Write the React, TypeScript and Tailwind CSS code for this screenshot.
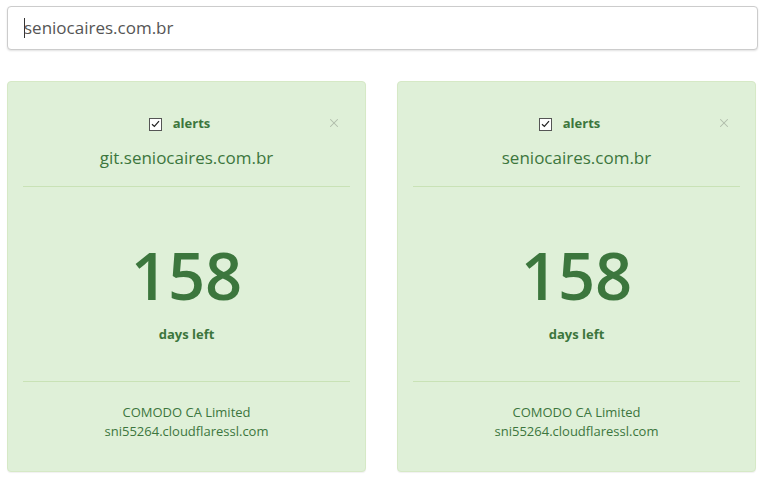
import { X } from "lucide-react";

const certs = [
  { host: "git.seniocaires.com.br", days: 158, issuer: "COMODO CA Limited", cn: "sni55264.cloudflaressl.com" },
  { host: "seniocaires.com.br", days: 158, issuer: "COMODO CA Limited", cn: "sni55264.cloudflaressl.com" },
];

export default function App() {
  return (
    <div className="min-h-screen bg-white px-[7px] pt-[6px] text-[#3c763d]" style={{ fontFamily: '"Open Sans", "Noto Sans", sans-serif' }}>
      {/* search */}
      <div className="w-[751px] h-[44px] border border-[#cccccc] rounded-[4px] bg-white shadow-[0_1px_2px_rgba(0,0,0,0.12)] flex items-center pl-[16px]">
        <span className="w-px h-[20px] bg-[#333]" />
        <span className="text-[17px] text-[#555] -ml-px">seniocaires.com.br</span>
      </div>

      <div className="flex gap-[31px] mt-[31px]">
        {certs.map((c) => (
          <div key={c.host} className="w-[359px] h-[391px] bg-[#dff0d8] border border-[#d6e9c6] rounded-[4px] shadow-[0_1px_1px_rgba(0,0,0,0.06)] flex flex-col px-[15px]">
            {/* head */}
            <div className="relative pt-[32px] pb-[16px] border-b border-[#c9e2b6]">
              <div className="flex items-center justify-center gap-[11px] h-[20px] pr-[14px]">
                <span className="w-[13px] h-[13px] border border-[#555] bg-white flex items-center justify-center">
                  <svg width="9" height="8" viewBox="0 0 9 8">
                    <path d="M1 4.2 L3.4 6.5 L8 1.2" fill="none" stroke="#222" strokeWidth="1.2" />
                  </svg>
                </span>
                <span className="text-[13px] font-bold">alerts</span>
              </div>
              <X className="absolute right-[9px] top-[34px] text-[#b0bcab]" size={14} strokeWidth={1.8} />
              <div className="text-center text-[17px] leading-[24px] mt-[12px] font-medium">{c.host}</div>
            </div>

            {/* body */}
            <div className="h-[195px] border-b border-[#c9e2b6] flex flex-col items-center">
              <div className="text-[65px] leading-[65px] font-semibold mt-[56px]">{c.days}</div>
              <div className="text-[13px] font-bold mt-[17px]">days left</div>
            </div>

            {/* foot */}
            <div className="flex flex-col items-center pt-[21px] text-[13px] leading-[19px]">
              <div>{c.issuer}</div>
              <div>{c.cn}</div>
            </div>
          </div>
        ))}
      </div>
    </div>
  );
}
